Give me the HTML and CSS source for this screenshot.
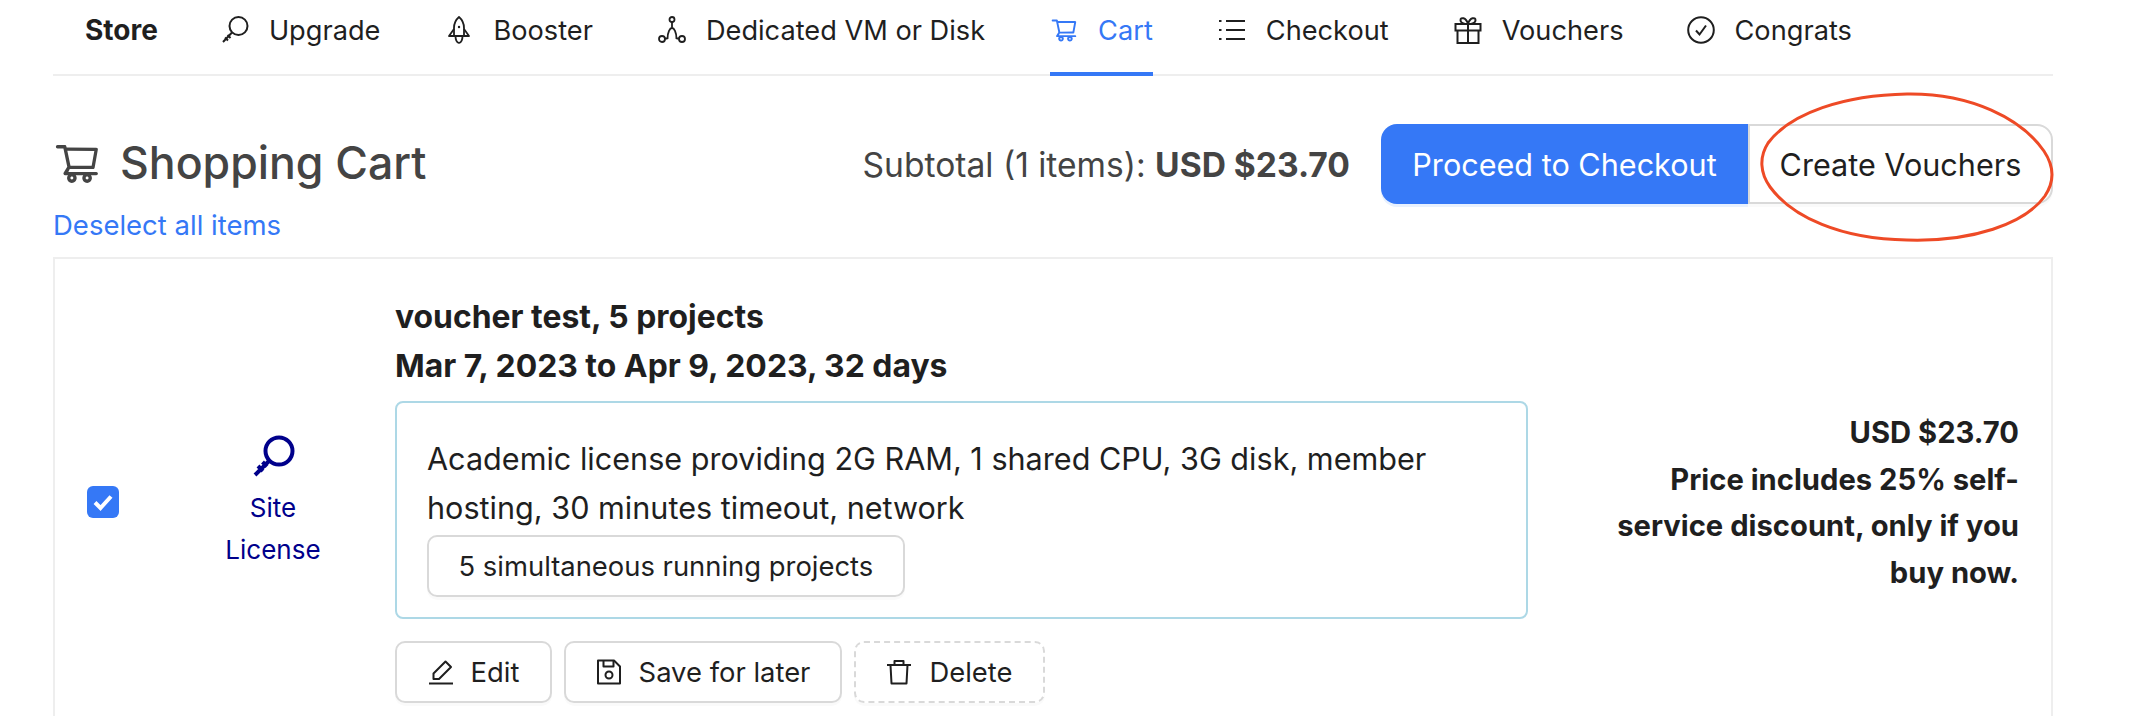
FILE: index.html
```html
<!DOCTYPE html>
<html lang="en">
<head>
<meta charset="utf-8">
<title>Shopping Cart</title>
<link rel="stylesheet" href="styles.css">
</head>
<body>
<svg class="sprite" aria-hidden="true">
  <symbol id="i-cart" viewBox="0 0 1024 1024"><path fill="currentColor" d="M922.9 701.9H327.4l29.9-60.9 496.8-.9c16.8 0 31.2-12 34.2-28.6l68.8-385.1c1.8-10.1-.9-20.5-7.5-28.4a34.99 34.99 0 0 0-26.6-12.5l-632-2.1-5.4-25.4c-3.4-16.2-18-28-34.6-28H96.5a35.3 35.3 0 1 0 0 70.6h125.9L246 312.8l58.1 281.3-74.8 122.1a34.96 34.96 0 0 0-3 36.8c6 11.9 18.1 19.4 31.5 19.4h62.8a102.43 102.43 0 0 0-20.6 61.7c0 56.6 46 102.6 102.6 102.6s102.6-46 102.6-102.6c0-22.3-7.4-44-20.6-61.7h161.1a102.43 102.43 0 0 0-20.6 61.7c0 56.6 46 102.6 102.6 102.6s102.6-46 102.6-102.6c0-22.3-7.4-44-20.6-61.7H923c19.4 0 35.3-15.8 35.3-35.3a35.42 35.42 0 0 0-35.4-35.2zM305.7 253l575.8 1.9-56.4 315.8-452.3.8L305.7 253zm96.9 612.7c-17.4 0-31.6-14.2-31.6-31.6 0-17.4 14.2-31.6 31.6-31.6s31.6 14.2 31.6 31.6a31.6 31.6 0 0 1-31.6 31.6zm325.1 0c-17.4 0-31.6-14.2-31.6-31.6 0-17.4 14.2-31.6 31.6-31.6s31.6 14.2 31.6 31.6a31.6 31.6 0 0 1-31.6 31.6z"/></symbol>
  <symbol id="i-key" viewBox="0 0 43 43"><g fill="none" stroke="currentColor" stroke-width="4"><circle cx="27" cy="16" r="13.5"/><path d="M17.5 25.5 3 40M6 31l5 5M10.5 27l4.5 4.500"/></g></symbol>
  <symbol id="i-key-thin" viewBox="0 0 28 28"><g fill="none" stroke="currentColor" stroke-width="2"><circle cx="17.500" cy="10" r="9"/><path d="M11 16.500 2 26M4 21.500l3 3M6.500 19l3 3"/></g></symbol>
  <symbol id="i-rocket" viewBox="0 0 28 28"><g fill="none" stroke="currentColor" stroke-width="1.800" stroke-linejoin="round"><path d="M14 1c-3.500 3-5 6.500-5 11v8h10v-8c0-4.500-1.500-8-5-11z"/><path d="M9 13l-5 7h20l-5-7M10.500 20c0 4 1.500 6.500 3.500 7 2-.5 3.500-3 3.500-7"/><circle cx="14" cy="11" r="1.200" fill="currentColor" stroke="none"/></g></symbol>
  <symbol id="i-nodes" viewBox="0 0 28 28"><g fill="none" stroke="currentColor" stroke-width="1.800"><circle cx="14" cy="3.500" r="2.500"/><circle cx="4" cy="23" r="3"/><circle cx="24" cy="23" r="3"/><path d="M14 6v6M9.500 23c0-7 2.500-11 4.500-11s4.500 4 4.500 11M7 22.500h2.500M18.500 22.500H21"/></g></symbol>
  <symbol id="i-list" viewBox="0 0 28 28"><g fill="none" stroke="currentColor" stroke-width="2"><path d="M8 5h19M8 14h19M8 23h19M1 5h2.500M1 14h2.500M1 23h2.500"/></g></symbol>
  <symbol id="i-gift" viewBox="0 0 28 28"><g fill="none" stroke="currentColor" stroke-width="2"><path d="M1.500 8h25v6.500h-25zM3.500 14.500V27h21V14.500zM14 8v19"/><path d="M14 8c-5.500 0-7.500-1.500-7.500-3.800C6.500 1 12 1 14 8c2-7 7.500-7 7.500-3.800C21.500 6.500 19.500 8 14 8z"/></g></symbol>
  <symbol id="i-check" viewBox="0 0 28 28"><g fill="none" stroke="currentColor" stroke-width="2"><circle cx="14" cy="14" r="12.800"/><path d="m9 14.500 3.500 4L19 9.500"/></g></symbol>
  <symbol id="i-edit" viewBox="0 0 26 26"><g fill="none" stroke="currentColor" stroke-width="2" stroke-linejoin="round"><path d="M1 24.500h24"/><path d="M5.500 20v-5.500L17.500 2.500l5.500 5.500L11 20z"/></g></symbol>
  <symbol id="i-save" viewBox="0 0 26 26"><g fill="none" stroke="currentColor" stroke-width="2" stroke-linejoin="round"><path d="M2 1.500h16L24 7.500v17H2z"/><path d="M7.500 1.500v6h10v-6"/><circle cx="13" cy="16" r="3.500"/></g></symbol>
  <symbol id="i-trash" viewBox="0 0 26 26"><g fill="none" stroke="currentColor" stroke-width="2" stroke-linejoin="round"><path d="M1 6h24M8.500 6V2h9v4M4.500 6l1 18.500h15l1-18.500"/></g></symbol>
</svg>

<div class="page">
  <nav class="tabs">
    <a class="tab tab-store">Store</a>
    <a class="tab"><svg class="tab-icon"><use href="#i-key-thin"/></svg>Upgrade</a>
    <a class="tab"><svg class="tab-icon"><use href="#i-rocket"/></svg>Booster</a>
    <a class="tab"><svg class="tab-icon"><use href="#i-nodes"/></svg>Dedicated VM or Disk</a>
    <a class="tab tab-active"><svg class="tab-icon"><use href="#i-cart"/></svg>Cart</a>
    <a class="tab"><svg class="tab-icon"><use href="#i-list"/></svg>Checkout</a>
    <a class="tab"><svg class="tab-icon"><use href="#i-gift"/></svg>Vouchers</a>
    <a class="tab tab-last"><svg class="tab-icon"><use href="#i-check"/></svg>Congrats</a>
  </nav>

  <header class="head">
    <h1 class="title"><svg class="title-icon"><use href="#i-cart"/></svg>Shopping Cart</h1>
    <div class="actions">
      <span class="subtotal">Subtotal (1 items): <b>USD $23.70</b></span>
      <div class="btn-group">
        <button class="btn-primary">Proceed to Checkout</button>
        <button class="btn-second">Create Vouchers</button>
      </div>
      <svg class="annotation" viewBox="0 0 296 152" preserveAspectRatio="none" aria-hidden="true"><path d="M148 3C212 2 262 28 284 60c10 15 11 30 1 45-20 28-72 46-137 44C82 148 34 126 12 96 2 82 1 66 10 52 32 22 86 4 148 3z"/></svg>
    </div>
  </header>
  <a class="deselect">Deselect all items</a>

  <section class="card">
    <div class="check-col"><span class="checkbox"><svg viewBox="0 0 32 32"><path d="m8 16.500 5.500 5.500L24 10.500"/></svg></span></div>
    <div class="kind-col">
      <svg class="kind-icon"><use href="#i-key"/></svg>
      <span>Site License</span>
    </div>
    <div class="body-col">
      <div class="item-title">voucher test, 5 projects</div>
      <div class="item-title">Mar 7, 2023 to Apr 9, 2023, 32 days</div>
      <div class="desc">
        <div>Academic license providing 2G RAM, 1 shared CPU, 3G disk, member hosting, 30 minutes timeout, network</div>
        <span class="chip">5 simultaneous running projects</span>
      </div>
      <div class="item-actions">
        <button class="btn btn-edit"><svg class="btn-icon"><use href="#i-edit"/></svg>Edit</button>
        <button class="btn btn-save"><svg class="btn-icon"><use href="#i-save"/></svg>Save for later</button>
        <button class="btn btn-dashed"><svg class="btn-icon"><use href="#i-trash"/></svg>Delete</button>
      </div>
    </div>
    <div class="price-col">USD $23.70<br>Price includes 25% self-service discount, only if you buy now.</div>
  </section>
</div>
</body>
</html>
```
FILE: styles.css
```css
* { box-sizing: border-box; }
html, body { margin: 0; height: 716px; overflow: hidden; background: #fff; }
body { font-family: Inter, "Noto Sans", sans-serif; font-size: 30.6px; line-height: 49px; color: #1f1f1f; }
.sprite { display: none; }
.page { padding: 0 93px 0 53px; }

.tabs { display: flex; gap: 65px; height: 76px; padding-left: 32px; border-bottom: 2px solid #eee; font-size: 27.2px; }
.tab { display: flex; align-items: center; height: 76px; padding-bottom: 12px; border-bottom: 4px solid transparent; white-space: nowrap; }
.tab-store { font-weight: 700; font-size: 28px; margin-right: -2px; }
.tab-last { margin-left: -2px; }
.tab-active { color: #3578f6; border-bottom-color: #3578f6; }
.tab-icon { width: 28px; height: 28px; margin-right: 20px; flex: none; }

.head { display: flex; justify-content: space-between; align-items: center; margin-top: 48px; height: 80px; }
.title { display: flex; align-items: center; margin: -3px 0 0; font-size: 44.6px; font-weight: 500; color: #444; line-height: 60px; }
.title-icon { width: 48px; height: 48px; margin-right: 19px; }
.actions { position: relative; display: flex; align-items: center; }
.subtotal { font-size: 33.6px; color: #444; margin-right: 31px; }
.subtotal b { font-weight: 700; }
.btn-group { display: flex; height: 80px; }
.btn-group button { font: inherit; font-size: 30.6px; cursor: pointer; height: 80px; padding-top: 2px; }
.btn-primary { width: 367px; background: #3578f6; color: #fff; border: 0; border-radius: 16px 0 0 16px; box-shadow: 0 3px 0 #e8f1fe; }
.btn-second { width: 305px; background: #fff; color: #1f1f1f; border: 2px solid #d9d9d9; border-radius: 0 16px 16px 0; box-shadow: 0 3px 0 rgba(0,0,0,.02); }
.annotation { position: absolute; right: -3px; top: -33px; width: 298px; height: 152px; overflow: visible; }
.annotation path { fill: none; stroke: #ee4a26; stroke-width: 3; }

.deselect { display: block; color: #3578f6; font-size: 27.5px; line-height: 49px; margin-top: -3px; }

.card { display: grid; grid-template-columns: 109px 199px 1133px 1fr; align-items: center; margin-top: 7px; padding: 33px 32px 34px; border: 2px solid #eee; }
.checkbox { display: block; width: 32px; height: 32px; margin-top: 8px; border-radius: 6px; background: #3578f6; }
.checkbox svg { display: block; width: 32px; height: 32px; fill: none; stroke: #fff; stroke-width: 4; }
.kind-col { display: flex; flex-direction: column; align-items: center; width: 154px; padding: 14px 20px 3px; text-align: center; color: #00008b; font-size: 26px; line-height: 42px; }
.kind-icon { width: 43px; height: 43px; margin-bottom: 9px; }
.item-title { font-size: 31.9px; font-weight: 700; }
.desc { margin-top: 11px; padding: 31px 30px 20px; border: 2px solid #add8e6; border-radius: 8px; }
.chip { display: inline-flex; align-items: center; height: 62px; padding: 0 29.500px; font-size: 27.4px; border: 2px solid #d9d9d9; border-radius: 10px; box-shadow: 0 3px 0 rgba(0,0,0,.02); margin-top: 3px; vertical-align: top; }
.item-actions { display: flex; gap: 12px; margin-top: 22px; }
.btn { display: flex; align-items: center; justify-content: center; height: 62px; padding: 0; font: inherit; font-size: 27.4px; color: #1f1f1f; background: #fff; border: 2px solid #d9d9d9; border-radius: 10px; box-shadow: 0 3px 0 rgba(0,0,0,.02); }
.btn-edit { width: 157px; }
.btn-save { width: 278px; }
.btn-dashed { width: 191px; border-style: dashed; }
.btn-icon { width: 26px; height: 26px; margin-right: 17px; }
.price-col { padding: 11px 0 0 60px; text-align: right; font-size: 29.2px; font-weight: 700; line-height: 46.500px; }
```
